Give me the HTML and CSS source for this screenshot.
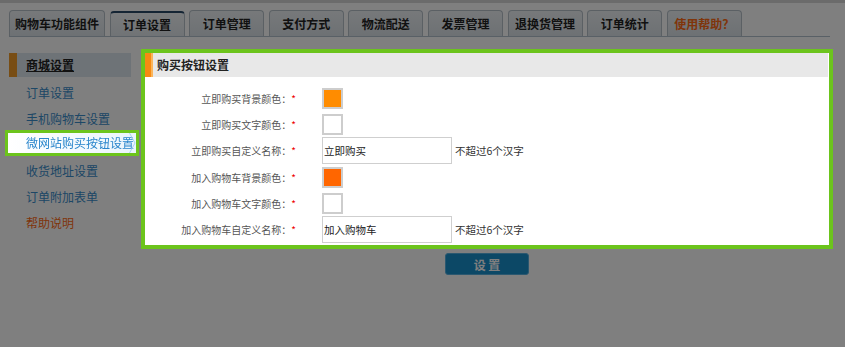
FILE: index.html
```html
<!DOCTYPE html>
<html lang="zh-CN">
<head>
    <meta charset="UTF-8">
    <title>购买按钮设置</title>
    <link rel="stylesheet" href="styles.css">
</head>
<body>

    <ul class="tabs">
        <li class="tab-wide">购物车功能组件</li>
        <li class="active">订单设置</li>
        <li>订单管理</li>
        <li>支付方式</li>
        <li>物流配送</li>
        <li>发票管理</li>
        <li>退换货管理</li>
        <li>订单统计</li>
        <li class="help">使用帮助？</li>
    </ul>

    <div class="main">
        <div class="side">
            <div class="side-title"><span>商城设置</span></div>
            <ul class="side-menu">
                <li>订单设置</li>
                <li>手机购物车设置</li>
                <li class="current hl">微网站购买按钮设置
                    <svg class="arrow" width="7" height="20" viewBox="0 0 7 20"><polyline points="0.5,0 6,10 0.5,20" fill="none" stroke="#a8d2ee" stroke-width="1"/></svg>
                </li>
                <li>收货地址设置</li>
                <li>订单附加表单</li>
                <li class="side-help">帮助说明</li>
            </ul>
        </div>

        <div class="content">
            <div class="panel hl">
                <div class="panel-title">购买按钮设置</div>
                <div class="form">
                    <div class="row">
                        <label>立即购买背景颜色：<em>*</em></label>
                        <span class="swatch swatch-buy"></span>
                    </div>
                    <div class="row">
                        <label>立即购买文字颜色：<em>*</em></label>
                        <span class="swatch"></span>
                    </div>
                    <div class="row row-input">
                        <label>立即购买自定义名称：<em>*</em></label>
                        <input type="text" value="立即购买">
                        <span class="tip">不超过6个汉字</span>
                    </div>
                    <div class="row">
                        <label>加入购物车背景颜色：<em>*</em></label>
                        <span class="swatch swatch-cart"></span>
                    </div>
                    <div class="row">
                        <label>加入购物车文字颜色：<em>*</em></label>
                        <span class="swatch"></span>
                    </div>
                    <div class="row row-input">
                        <label>加入购物车自定义名称：<em>*</em></label>
                        <input type="text" value="加入购物车">
                        <span class="tip">不超过6个汉字</span>
                    </div>
                </div>
            </div>
            <div class="btn-row">
                <button class="save-btn">设 置</button>
            </div>
        </div>
    </div>

    <div class="mask"></div>

</body>
</html>
```

FILE: styles.css
```css
html, body {
    margin: 0;
    padding: 0;
}

body {
    font-family: "Noto Sans CJK SC", "DejaVu Sans", sans-serif;
    background: #fff;
    border-top: 3px solid #d6d6d6;
    height: 344px;
    overflow: hidden;
}

/* tabs */
.tabs {
    list-style: none;
    margin: 7px 15px 0 9px;
    padding: 0;
    display: flex;
    gap: 4.6px;
    height: 26px;
    border-bottom: 1px solid #b2c0cc;
}

.tabs li {
    box-sizing: border-box;
    width: 75px;
    height: 26px;
    border: 1px solid #b6c0c9;
    border-bottom: none;
    border-radius: 4px 4px 0 0;
    background: linear-gradient(#eef2f5, #dbe2e8);
    text-align: center;
    line-height: 25px;
    font-size: 12px;
    font-weight: bold;
    color: #222;
}

.tabs .tab-wide {
    width: 96px;
}

.tabs .active {
    margin-top: 1px;
    height: 25px;
    line-height: 23px;
    border-top: 2px solid #2a4a68;
    background: linear-gradient(#f4f7f9, #e1e7ec);
}

.tabs .help {
    color: #ff6a14;
}

/* layout */
.main {
    display: flex;
    align-items: flex-start;
}

.side {
    width: 127px;
    margin: 16px 0 0 9px;
}

.side-title {
    width: 122px;
    height: 24px;
    box-sizing: border-box;
    border-left: 8px solid #f09a28;
    background: #dce6ee;
    padding-left: 9px;
    line-height: 24px;
    font-size: 12px;
    font-weight: bold;
    color: #222;
}

.side-title span {
    text-decoration: underline;
}

.side-menu {
    list-style: none;
    margin: 3px 0 0;
    padding: 0;
}

.side-menu li {
    height: 26px;
    line-height: 26px;
    padding-left: 17px;
    font-size: 12px;
    color: #3a8ecc;
}

.side-menu .current {
    position: relative;
    box-sizing: border-box;
    width: 128px;
    height: 20px;
    line-height: 20px;
    margin: 1px 0 5px -1px;
    padding-left: 18px;
    background: linear-gradient(to right, #fff, #eaf5fc);
    color: #2a86cc;
    box-shadow: 0 0 0 3px #6cc41c;
}

.side-menu .current .arrow {
    position: absolute;
    right: 0;
    top: 0;
}

.side-menu .side-help {
    color: #ff6a14;
}

.content {
    width: 692px;
    margin: 12px 0 0 5px;
}

/* panel */
.panel {
    border: 4px solid #6cc41c;
    background: #fff;
}

.hl {
    position: relative;
    z-index: 101;
}

.panel-title {
    height: 24px;
    line-height: 24px;
    margin-right: 1px;
    background: #e8e8e8;
    border-left: 6px solid #f78a12;
    box-shadow: inset 2px 0 0 #fbb45a;
    padding-left: 6px;
    font-size: 12px;
    font-weight: bold;
    color: #222;
}

.form {
    padding: 8px 0 2px;
}

.row {
    display: flex;
    align-items: center;
    height: 26px;
}

.row-input {
    height: 27px;
}

.row label {
    width: 151px;
    text-align: right;
    font-size: 10px;
    color: #555;
    margin-right: 26px;
}

.row label em {
    font-style: normal;
    color: #e00;
}

.swatch {
    box-sizing: border-box;
    width: 21px;
    height: 21px;
    border: 2px solid #cdcdcd;
    background: #fff;
}

.swatch-buy {
    background: #ff8c00;
}

.swatch-cart {
    background: #ff6600;
}

.row input {
    box-sizing: border-box;
    width: 130px;
    height: 27px;
    margin: 0;
    padding: 0 1px;
    border: 1px solid #cfcfcf;
    font-family: inherit;
    font-size: 10.5px;
    color: #222;
}

.tip {
    margin-left: 3px;
    font-size: 10.5px;
    color: #333;
}

.btn-row {
    display: flex;
    justify-content: center;
    margin-top: 4px;
}

.save-btn {
    width: 84px;
    height: 22px;
    border: 1px solid #56b0e0;
    border-radius: 3px;
    background: #1890cc;
    color: #fff;
    font-family: inherit;
    font-size: 12px;
    font-weight: bold;
    padding: 0;
}

.mask {
    position: fixed;
    top: 0;
    left: 0;
    right: 0;
    bottom: 0;
    background: rgba(0, 0, 0, 0.5);
    z-index: 100;
}
```
